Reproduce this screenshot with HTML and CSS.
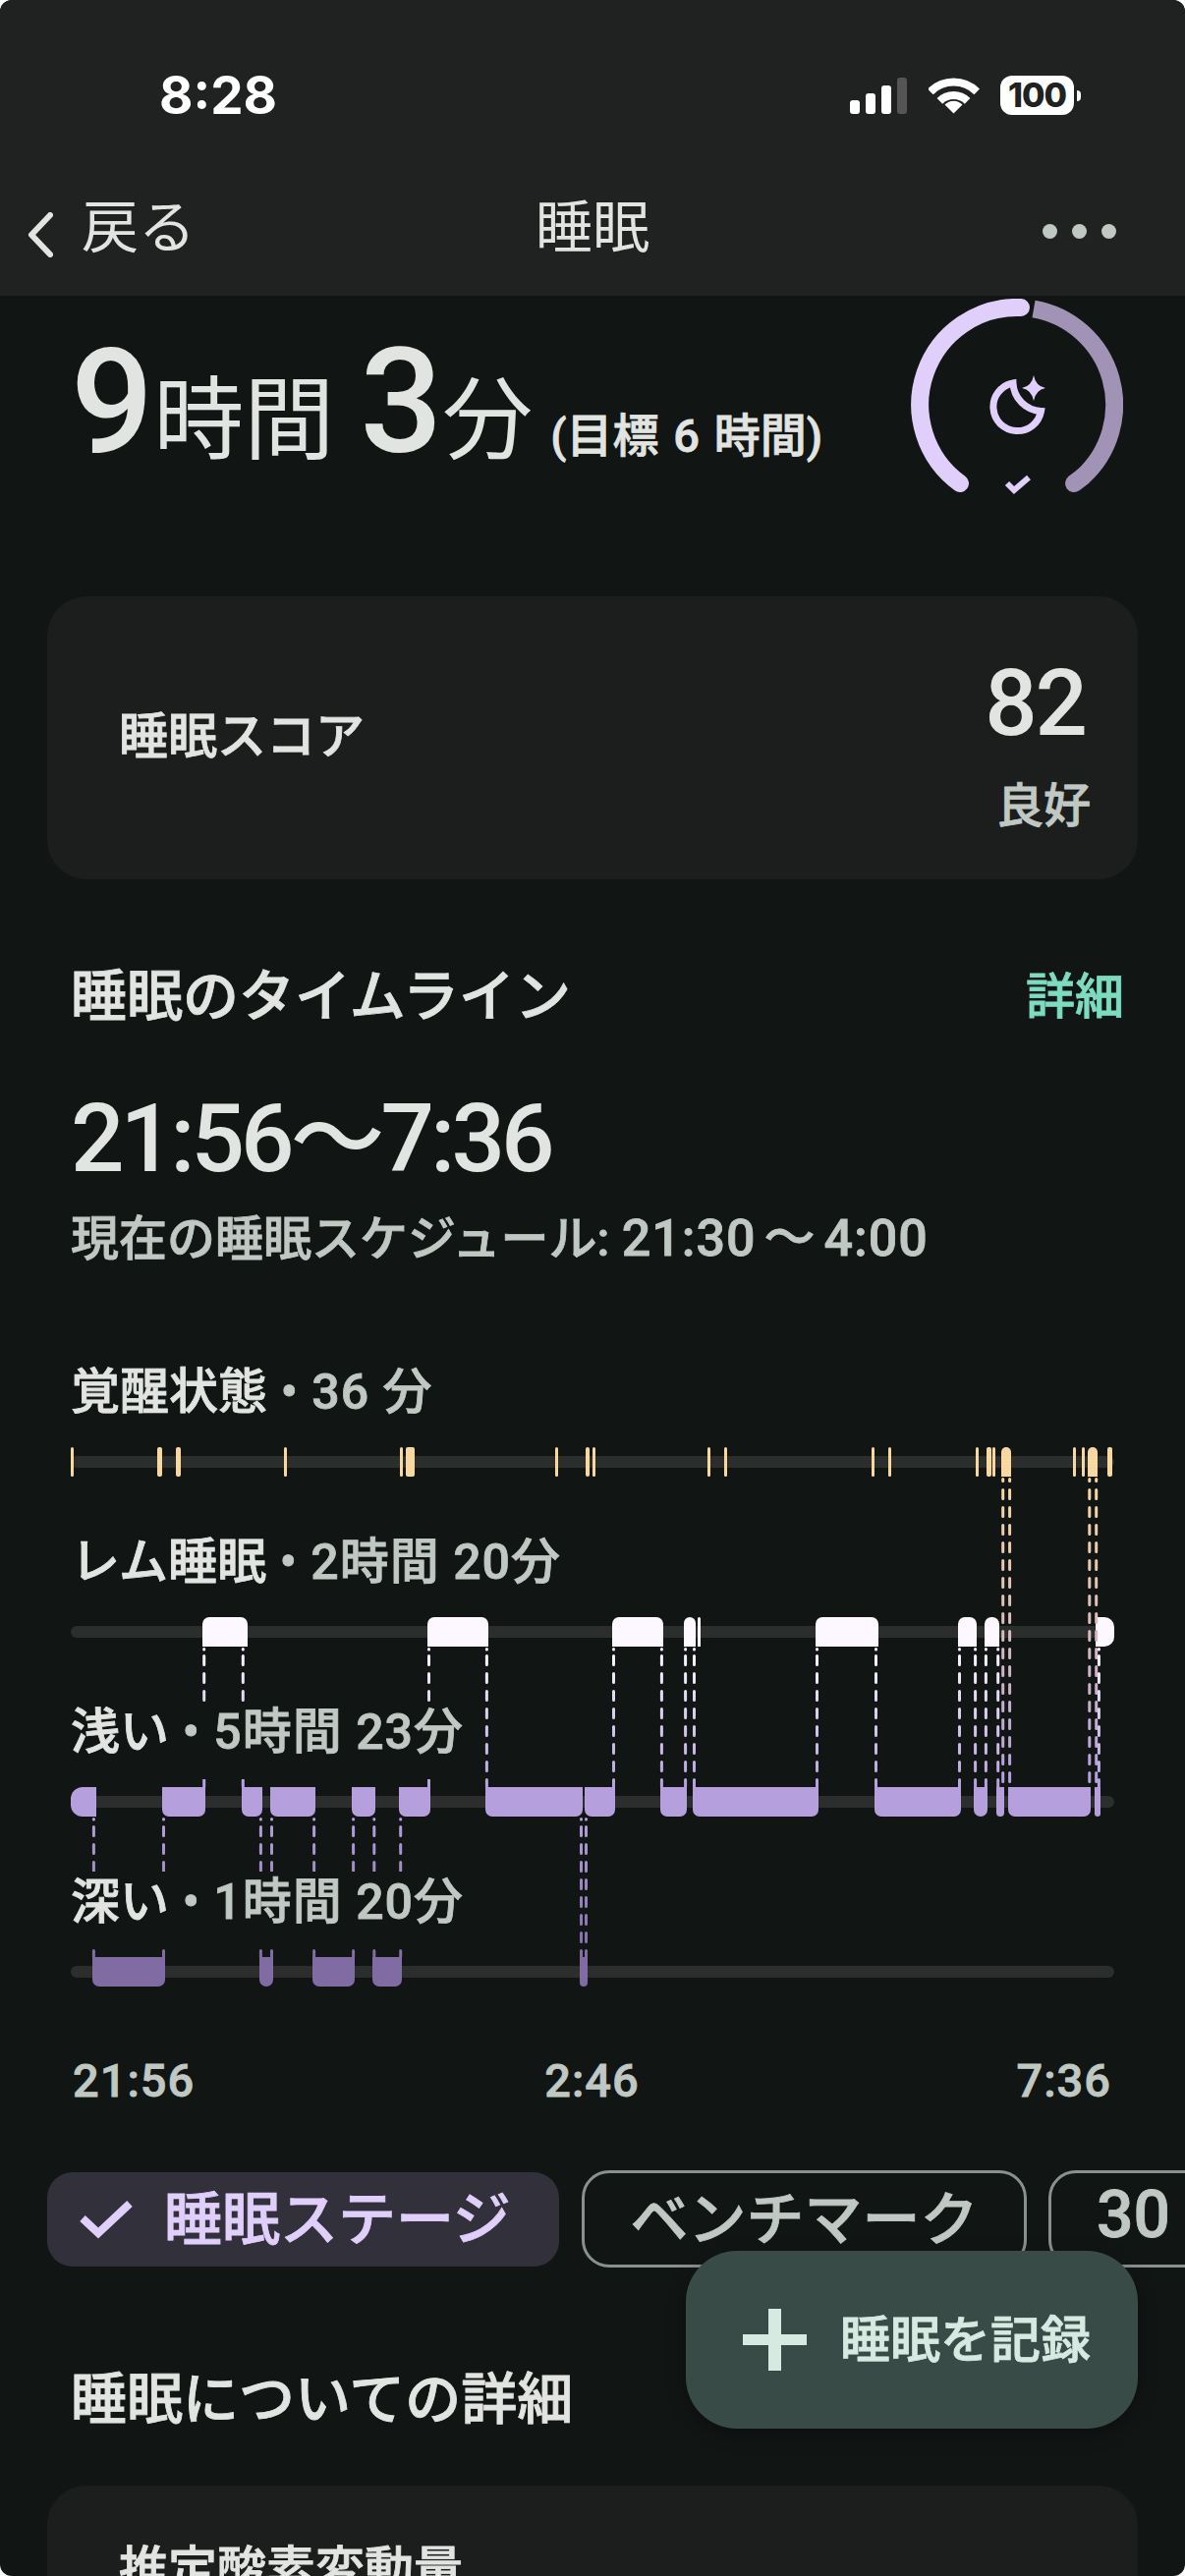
FILE: index.html
```html
<!DOCTYPE html>
<html lang="ja">
<head>
    <meta charset="UTF-8">
    <meta name="viewport" content="width=device-width, initial-scale=1.0">
    <title>睡眠</title>
    <link rel="stylesheet" href="styles.css">
</head>
<body>
    <div class="screen">
        <header class="topbar">
            <div class="status">
                <span class="clock">8:28</span>
                <div class="status-icons">
                    <svg width="58" height="38" viewBox="865 78 58 38">
                        <rect x="865" y="102" width="10" height="14" rx="3" fill="#fff"/>
                        <rect x="881" y="95" width="10" height="21" rx="3" fill="#fff"/>
                        <rect x="897" y="87" width="10" height="29" rx="3" fill="#fff"/>
                        <rect x="913" y="79" width="10" height="37" rx="3" fill="#555"/>
                    </svg>
                    <svg class="wifi" width="52" height="40" viewBox="945 78 52 40">
                        <path d="M946.8 94.3A33.5 33.5 0 0 1 994.2 94.3" fill="none" stroke="#fff" stroke-width="8"/>
                        <path d="M956.4 103.9A20 20 0 0 1 984.6 103.9" fill="none" stroke="#fff" stroke-width="8"/>
                        <path d="M970.5 116.5L961.5 107.5A12.5 12.5 0 0 1 979.5 107.5Z" fill="#fff"/>
                    </svg>
                    <div class="battery">100</div>
                </div>
            </div>
            <nav class="nav">
                <div class="nav-back">
                    <svg width="27" height="46" viewBox="0 0 27 46">
                        <path d="M24 3L5 23L24 43" fill="none" stroke="#e2e4e1" stroke-width="6" stroke-linecap="round" stroke-linejoin="round"/>
                    </svg>
                    <span>戻る</span>
                </div>
                <div class="nav-title">睡眠</div>
                <div class="nav-more"><i></i><i></i><i></i></div>
            </nav>
        </header>

        <main class="content">
            <div class="hero">
                <div class="hero-text">
                    <span class="big">9</span><span class="unit">時間</span><span class="big gap">3</span><span class="unit">分</span><span class="goal">(目標 6 時間)</span>
                </div>
                <svg class="ring" width="216" height="202" viewBox="927 304 216 202">
                    <path d="M1039 313A99 99 0 0 0 977 492" fill="none" stroke="#e0cffa" stroke-width="18" stroke-linecap="round"/>
                    <path d="M1052 314.5A99 99 0 0 1 1101 486" fill="none" stroke="#a193b5" stroke-width="18"/>
                    <path d="M1101 486Q1097 489 1093 492" fill="none" stroke="#a193b5" stroke-width="18" stroke-linecap="round"/>
                    <path d="M1031 390A24.5 24.5 0 1 0 1059.5 418.5A30 30 0 0 1 1031 390Z" fill="none" stroke="#e0cffa" stroke-width="7"/>
                    <path d="M1052 382Q1054 393 1064 395Q1054 397 1052 408Q1050 397 1040 395Q1050 393 1052 382Z" fill="#e0cffa"/>
                    <path d="M1025 492L1032 499L1047 486" fill="none" stroke="#e0cffa" stroke-width="6"/>
                </svg>
            </div>

            <section class="card score-card">
                <div class="card-label">睡眠スコア</div>
                <div class="score">
                    <div class="score-num">82</div>
                    <div class="score-word">良好</div>
                </div>
            </section>

            <section class="timeline">
                <div class="section-head">
                    <h2>睡眠のタイムライン</h2>
                    <a class="more-link">詳細</a>
                </div>
                <div class="time-range">21:56〜7:36</div>
                <div class="schedule">現在の睡眠スケジュール: <span class="schedule-time">21:30 〜 4:00</span></div>

                <div class="chart">
                    <svg class="links" width="1062" height="692" viewBox="72 1386 1062 692">
                        <defs>
                            <linearGradient id="fadeAwake" gradientUnits="userSpaceOnUse" x1="0" y1="1504" x2="0" y2="1815">
                                <stop offset="0" stop-color="#f9d8a0"/>
                                <stop offset="1" stop-color="#b59fdd"/>
                            </linearGradient>
                            <linearGradient id="fadeRem" gradientUnits="userSpaceOnUse" x1="0" y1="1677" x2="0" y2="1819">
                                <stop offset="0" stop-color="#fdf8ff"/>
                                <stop offset="1" stop-color="#b59fdd"/>
                            </linearGradient>
                            <linearGradient id="fadeLight" gradientUnits="userSpaceOnUse" x1="0" y1="1850" x2="0" y2="1992">
                                <stop offset="0" stop-color="#b59fdd"/>
                                <stop offset="1" stop-color="#806ba3"/>
                            </linearGradient>
                        </defs>
                        <!-- awake to light -->
                        <path class="dash" stroke="url(#fadeAwake)" d="M1020.7 1516.5V1815M1027.6 1516.5V1815M1108.8 1516.5V1815M1115.7 1516.5V1815"/>
                        <path class="tick" stroke="url(#fadeAwake)" d="M1020.7 1505.5V1507.5M1027.6 1505.5V1507.5M1108.8 1505.5V1507.5M1115.7 1505.5V1507.5"/>
                        <!-- rem to light -->
                        <path class="dash" stroke="url(#fadeRem)" d="M207.7 1685.5V1819M247.3 1685.5V1819M436.5 1685.5V1819M495.4 1685.5V1819M624.5 1685.5V1819M673.4 1685.5V1819M697.6 1685.5V1819M706.5 1685.5V1819M831.5 1685.5V1819M891.5 1685.5V1819M976.5 1685.5V1819M992.6 1685.5V1819M1003.4 1685.5V1819M1015.7 1685.5V1819M1118.4 1685.5V1819"/>
                        <path class="tick" stroke="url(#fadeRem)" d="M207.7 1678.5V1679M247.3 1678.5V1679M436.5 1678.5V1679M495.4 1678.5V1679M624.5 1678.5V1679M673.4 1678.5V1679M697.6 1678.5V1679M706.5 1678.5V1679M831.5 1678.5V1679M891.5 1678.5V1679M976.5 1678.5V1679M992.6 1678.5V1679M1003.4 1678.5V1679M1015.7 1678.5V1679M1118.4 1678.5V1679"/>
                        <!-- light to deep -->
                        <path class="dash" stroke="url(#fadeLight)" d="M95.4 1859.5V1992M166.5 1859.5V1992M265.4 1859.5V1992M276.5 1859.5V1992M319.6 1859.5V1992M359.6 1859.5V1992M380.8 1859.5V1992M407.7 1859.5V1992M591.5 1859.5V1992M596.5 1859.5V1992"/>
                        <path class="tick" stroke="url(#fadeLight)" d="M95.4 1851.5V1852M166.5 1851.5V1852M265.4 1851.5V1852M276.5 1851.5V1852M319.6 1851.5V1852M359.6 1851.5V1852M380.8 1851.5V1852M407.7 1851.5V1852M591.5 1851.5V1852M596.5 1851.5V1852"/>
                    </svg>

                    <div class="stage">
                        <div class="stage-label"><b>覚醒状態</b> • 36 分</div>
                        <div class="lane awake">
                            <i style="left:0;width:3px"></i>
                            <i style="left:88px;width:5px"></i>
                            <i style="left:107px;width:5px"></i>
                            <i style="left:217px;width:3px"></i>
                            <i style="left:335px;width:3px"></i>
                            <i style="left:341px;width:9px"></i>
                            <i style="left:493px;width:3px"></i>
                            <i style="left:524px;width:4px"></i>
                            <i style="left:531px;width:3px"></i>
                            <i style="left:648px;width:3px"></i>
                            <i style="left:665px;width:3px"></i>
                            <i style="left:815px;width:3px"></i>
                            <i style="left:832px;width:3px"></i>
                            <i style="left:921px;width:3px"></i>
                            <i style="left:932px;width:5px"></i>
                            <i style="left:938px;width:3px"></i>
                            <i class="wide" style="left:947px;width:10px"></i>
                            <i style="left:1020px;width:3px"></i>
                            <i style="left:1029px;width:3px"></i>
                            <i class="wide" style="left:1035px;width:10px"></i>
                            <i style="left:1055px;width:5px"></i>
                        </div>
                    </div>
                    <div class="stage">
                        <div class="stage-label"><b>レム睡眠</b> • 2時間 20分</div>
                        <div class="lane rem">
                            <i style="left:134px;width:46px"></i>
                            <i style="left:363px;width:62px"></i>
                            <i style="left:551px;width:52px"></i>
                            <i style="left:624px;width:12px"></i>
                            <i style="left:638px;width:3px"></i>
                            <i style="left:758px;width:64px"></i>
                            <i style="left:903px;width:19px"></i>
                            <i style="left:930px;width:15px"></i>
                            <i class="end" style="left:1043px;width:19px"></i>
                        </div>
                    </div>
                    <div class="stage">
                        <div class="stage-label"><b>浅い</b> • 5時間 23分</div>
                        <div class="lane light">
                            <i class="start" style="left:0;width:26px"></i>
                            <i style="left:93px;width:44px"></i>
                            <i style="left:174px;width:21px"></i>
                            <i style="left:203px;width:46px"></i>
                            <i style="left:286px;width:24px"></i>
                            <i style="left:334px;width:32px"></i>
                            <i style="left:422px;width:99px"></i>
                            <i style="left:523px;width:31px"></i>
                            <i style="left:600px;width:27px"></i>
                            <i style="left:633px;width:128px"></i>
                            <i style="left:818px;width:88px"></i>
                            <i style="left:919px;width:14px"></i>
                            <i style="left:942px;width:8px"></i>
                            <i style="left:954px;width:84px"></i>
                            <i style="left:1042px;width:6px"></i>
                        </div>
                    </div>
                    <div class="stage">
                        <div class="stage-label"><b>深い</b> • 1時間 20分</div>
                        <div class="lane deep">
                            <i style="left:22px;width:74px"></i>
                            <i style="left:192px;width:14px"></i>
                            <i style="left:246px;width:43px"></i>
                            <i style="left:307px;width:30px"></i>
                            <i style="left:518px;width:8px"></i>
                        </div>
                    </div>
                </div>

                <div class="axis">
                    <span>21:56</span>
                    <span>2:46</span>
                    <span class="axis-end">7:36</span>
                </div>
            </section>

            <div class="chips">
                <div class="chip selected">
                    <svg width="54" height="40" viewBox="0 0 54 40">
                        <path d="M3 19L19 34L51 4" fill="none" stroke="#e0cffa" stroke-width="8"/>
                    </svg>
                    <span>睡眠ステージ</span>
                </div>
                <div class="chip">ベンチマーク</div>
                <div class="chip chip-range"><span class="chip-num">30</span> 日間</div>
            </div>

            <h2 class="details-title">睡眠についての詳細</h2>

            <section class="card oxygen-card">
                <div class="card-label">推定酸素変動量</div>
            </section>
        </main>

        <button class="fab">
            <svg width="65" height="63" viewBox="0 0 65 63">
                <rect x="26" y="0" width="13" height="63" fill="#d6eae2"/>
                <rect x="0" y="26" width="65" height="11" fill="#d6eae2"/>
            </svg>
            <span>睡眠を記録</span>
        </button>
    </div>
</body>
</html>
```

FILE: styles.css
```css
* {
    box-sizing: border-box;
    margin: 0;
    padding: 0;
}

body {
    background-color: #fff;
    font-family: Roboto, "Noto Sans CJK JP", sans-serif;
    color: #e2e4e1;
}

.screen {
    position: relative;
    width: 1206px;
    height: 2622px;
    overflow: hidden;
    background-color: #111514;
    border-radius: 12px;
}

/* the app's medium weight sits between the installed regular and bold */
.goal,
.card-label,
.score-word,
h2,
.more-link,
.schedule,
.stage-label,
.axis,
.chip,
.fab {
    font-weight: 500;
    -webkit-text-stroke: 0.8px currentColor;
}

/* top bar */
.topbar {
    height: 301px;
    background-color: #202221;
}

.status {
    display: flex;
    justify-content: space-between;
    align-items: center;
    height: 194px;
    padding: 0 106px 0 162px;
}

.clock {
    font-family: Inter, sans-serif;
    font-size: 53px;
    font-weight: 700;
    color: #fff;
}

.status-icons {
    display: flex;
    align-items: center;
}

.status-icons svg {
    display: block;
}

.wifi {
    margin-left: 22px;
}

.battery {
    position: relative;
    width: 75px;
    height: 40px;
    margin: 0 7px 0 21px;
    background-color: #fff;
    border-radius: 12px;
    color: #202221;
    font-family: Inter, sans-serif;
    font-size: 34px;
    font-weight: 800;
    line-height: 40px;
    text-align: center;
    letter-spacing: -1px;
}

.battery::after {
    content: "";
    position: absolute;
    left: 78px;
    top: 15px;
    width: 4px;
    height: 11px;
    background-color: #fff;
    border-radius: 0 4px 4px 0;
}

.nav {
    display: grid;
    grid-template-columns: 1fr auto 1fr;
    align-items: center;
    height: 76px;
    padding: 0 70px;
    line-height: 64px;
}

.nav-back {
    display: flex;
    align-items: center;
    gap: 29px;
    margin-left: -43px;
    font-size: 58px;
}

.nav-back svg {
    margin-top: 14px;
}

.nav-title {
    font-size: 58px;
}

.nav-more {
    display: flex;
    justify-content: flex-end;
    gap: 15px;
    margin-top: 6px;
}

.nav-more i {
    width: 15px;
    height: 15px;
    background-color: #c0c8c3;
    border-radius: 50%;
}

/* content */
.content {
    padding: 0 48px;
}

.hero {
    display: flex;
    justify-content: space-between;
    height: 306px;
    padding: 3px 15px 0 24px;
}

.hero-text {
    padding-top: 32px;
    line-height: 148px;
    white-space: nowrap;
}

.big {
    font-size: 148px;
    font-weight: 500;
}

.gap {
    margin-left: 26px;
}

.unit {
    font-size: 92px;
}

.goal {
    margin-left: 18px;
    font-size: 47px;
    word-spacing: 3px;
}

.ring {
    display: block;
}

.card {
    background-color: #1c1e1d;
    border-radius: 40px;
}

.card-label {
    font-size: 50px;
}

.score-card {
    display: flex;
    justify-content: space-between;
    align-items: center;
    height: 288px;
    padding: 0 48px 0 73px;
}

.score-card .card-label {
    margin-bottom: 12px;
}

.score {
    margin-top: 10px;
    text-align: right;
}

.score-num {
    padding-right: 5px;
    font-size: 94px;
    font-weight: 500;
    line-height: 110px;
    letter-spacing: -2px;
}

.score-word {
    margin-top: 20px;
    font-size: 48px;
    line-height: 60px;
    color: #c0c8c3;
}

.timeline {
    padding: 0 14px 0 24px;
}

.section-head {
    display: flex;
    justify-content: space-between;
    align-items: center;
    margin-top: 85px;
    line-height: 70px;
}

h2 {
    font-size: 57px;
}

.more-link {
    font-size: 50px;
    color: #7ddcc0;
}

.time-range {
    margin-top: 59px;
    font-size: 96px;
    font-weight: 500;
    line-height: 100px;
    letter-spacing: -4px;
}

.schedule {
    height: 60px;
    margin-top: 22px;
    font-size: 49px;
    line-height: 60px;
    color: #c0c8c3;
}

.schedule-time {
    font-size: 52px;
    letter-spacing: 1px;
    word-spacing: -6px;
}

/* sleep stages chart */
.chart {
    position: relative;
    width: 1062px;
    margin-top: 95px;
}

.links {
    position: absolute;
    left: 0;
    top: 0;
    z-index: 1;
}

.dash {
    fill: none;
    stroke-width: 3;
    stroke-linecap: round;
    stroke-dasharray: 9 9;
}

.tick {
    fill: none;
    stroke-width: 3;
    stroke-linecap: round;
}

.stage {
    height: 173px;
}

/* background hides the dashed links running behind the label */
.stage-label {
    position: relative;
    z-index: 2;
    display: block;
    width: max-content;
    height: 79px;
    margin-bottom: 8px;
    padding-top: 1px;
    background-color: #111514;
    font-size: 50px;
    line-height: 60px;
    letter-spacing: 1px;
    color: #c0c8c3;
}

.stage-label b {
    font-weight: 500;
    letter-spacing: 0;
    color: #e2e4e1;
}

.lane {
    position: relative;
    height: 30px;
}

.lane::before {
    content: "";
    position: absolute;
    left: 0;
    right: 0;
    top: 9px;
    height: 12px;
    background-color: #2c2e2d;
    border-radius: 6px;
}

.lane i {
    position: absolute;
    top: 0;
    height: 30px;
}

.awake i {
    background-color: #f9d8a0;
    border-radius: 2px;
}

.awake i.wide {
    border-radius: 5px 5px 0 0;
}

.rem i {
    background-color: #fdf8ff;
    border-radius: 7px 7px 0 0;
}

.rem i.end {
    border-radius: 0 10px 10px 0;
}

.light i {
    background-color: #b59fdd;
    border-radius: 0 0 7px 7px;
}

.light i.start {
    border-radius: 12px 0 0 12px;
}

.deep i {
    background-color: #806ba3;
    border-radius: 0 0 7px 7px;
}

.axis {
    display: grid;
    grid-template-columns: 1fr auto 1fr;
    width: 1062px;
    margin-top: 10px;
    padding: 0 3px 0 2px;
    font-size: 47px;
    line-height: 60px;
    letter-spacing: 1px;
    color: #c0c8c3;
}

.axis-end {
    text-align: right;
}

/* filter chips */
.chips {
    display: flex;
    align-items: center;
    gap: 23px;
    height: 99px;
    margin-top: 61px;
    white-space: nowrap;
}

.chip {
    flex: none;
    display: flex;
    justify-content: center;
    align-items: center;
    width: 453px;
    height: 99px;
    padding-bottom: 8px;
    border: 3px solid #8a918d;
    border-radius: 28px;
    font-size: 59px;
    color: #c0c8c3;
}

.chip.selected {
    justify-content: flex-start;
    gap: 32px;
    width: 521px;
    height: 96px;
    padding-left: 33px;
    border: none;
    border-radius: 26px;
    background-color: #32303a;
    color: #e0cffa;
}

.chip.selected svg {
    margin-top: 8px;
}

.chip-range {
    justify-content: flex-start;
    gap: 16px;
    width: 300px;
    margin-left: -1px;
    padding-left: 46px;
}

.chip-num {
    font-size: 66px;
}

.details-title {
    margin-top: 100px;
    padding-left: 24px;
    line-height: 70px;
}

.oxygen-card {
    height: 300px;
    margin-top: 52px;
    padding: 45px 73px;
}

.fab {
    position: absolute;
    left: 698px;
    top: 2291px;
    display: flex;
    align-items: center;
    gap: 34px;
    width: 460px;
    height: 181px;
    padding-left: 58px;
    border: none;
    border-radius: 52px;
    background-color: #394b47;
    box-shadow: 0 6px 20px rgba(0, 0, 0, 0.3);
    color: #d6eae2;
    font-family: inherit;
    font-size: 51px;
}

.fab span {
    margin-bottom: 8px;
}
```
